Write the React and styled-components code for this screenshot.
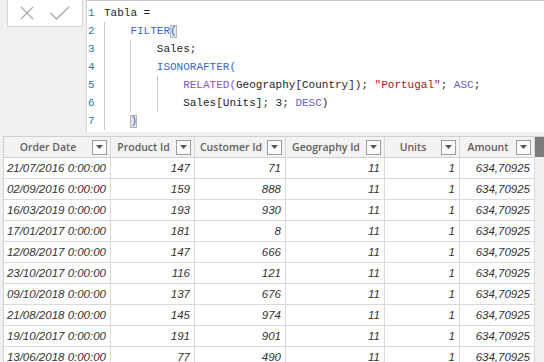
import React from 'react';
import styled, { createGlobalStyle } from 'styled-components';

const GlobalStyle = createGlobalStyle`
  html, body {
    margin: 0;
    padding: 0;
    background: #f0f0f0;
    overflow: hidden;
  }
`;

const code = [
  { indent: 0, parts: [['Tabla =', 'plain']] },
  { indent: 1, parts: [['FILTER', 'fn'], ['(', 'match']] },
  { indent: 2, parts: [['Sales;', 'plain']] },
  { indent: 2, parts: [['ISONORAFTER(', 'fn']] },
  {
    indent: 3,
    parts: [
      ['RELATED(', 'fn2'],
      ['Geography[Country]); ', 'plain'],
      ['"Portugal"', 'str'],
      ['; ', 'plain'],
      ['ASC', 'kw'],
      [';', 'plain'],
    ],
  },
  { indent: 3, parts: [['Sales[Units]; 3; ', 'plain'], ['DESC', 'kw'], [')', 'plain']] },
  { indent: 1, parts: [[')', 'match']] },
];

const columns = ['Order Date', 'Product Id', 'Customer Id', 'Geography Id', 'Units', 'Amount'];

const rows = [
  ['21/07/2016 0:00:00', 147, 71],
  ['02/09/2016 0:00:00', 159, 888],
  ['16/03/2019 0:00:00', 193, 930],
  ['17/01/2017 0:00:00', 181, 8],
  ['12/08/2017 0:00:00', 147, 666],
  ['23/10/2017 0:00:00', 116, 121],
  ['09/10/2018 0:00:00', 137, 676],
  ['21/08/2018 0:00:00', 145, 974],
  ['19/10/2017 0:00:00', 191, 901],
  ['13/06/2018 0:00:00', 77, 490],
];

function App() {
  return (
    <Page>
      <GlobalStyle />
      <TopArea>
        <ActionBox>
          <svg width="16" height="16" viewBox="0 0 16 16">
            <path d="M2 2 L14 14 M14 2 L2 14" stroke="#ababab" strokeWidth="1.3" fill="none" />
          </svg>
          <svg width="22" height="16" viewBox="0 0 22 16">
            <path d="M1.5 8 L7.5 14 L20.5 1.5" stroke="#ababab" strokeWidth="1.3" fill="none" />
          </svg>
        </ActionBox>
        <Editor>
          {code.map((line, i) => (
            <CodeLine key={i}>
              <LineNo>{i + 1}</LineNo>
              {Array.from({ length: line.indent }).map((_, g) => (
                <Guide key={g} />
              ))}
              {line.parts.map(([text, kind], j) => (
                <Token key={j} $kind={kind}>{text}</Token>
              ))}
            </CodeLine>
          ))}
        </Editor>
      </TopArea>
      <TableArea>
        <Table>
          <HeaderRow>
            {columns.map((c) => (
              <HeadCell key={c}>
                <HeadLabel>{c}</HeadLabel>
                <Dropdown>
                  <svg width="7" height="4" viewBox="0 0 7 4">
                    <path d="M0 0 L7 0 L3.5 4 Z" fill="#555" />
                  </svg>
                </Dropdown>
              </HeadCell>
            ))}
          </HeaderRow>
          {rows.map((r, i) => (
            <Row key={i}>
              <Cell>{r[0]}</Cell>
              <Cell>{r[1]}</Cell>
              <Cell>{r[2]}</Cell>
              <Cell>11</Cell>
              <Cell>1</Cell>
              <Cell>634,70925</Cell>
            </Row>
          ))}
        </Table>
        <Scrollbar>
          <Thumb />
        </Scrollbar>
      </TableArea>
    </Page>
  );
}

export default App;

const Page = styled.div`
  width: 544px;
  height: 362px;
  overflow: hidden;
  background: #f0f0f0;
`;

const TopArea = styled.div`
  display: flex;
  align-items: flex-start;
  height: 136px;
`;

const ActionBox = styled.div`
  margin-left: 7px;
  width: 74px;
  height: 26px;
  background: #fff;
  border: 1px solid #d4d4d4;
  border-top: 0;
  box-sizing: content-box;
  display: flex;
  align-items: center;
  gap: 14px;
  justify-content: center;
`;

const Editor = styled.div`
  margin-left: 3px;
  flex: 1;
  height: 128px;
  background: #fff;
  border-top: 1px solid #c4c4c4;
  border-left: 1px solid #d4d4d4;
  padding-top: 3px;
  font-family: "Liberation Mono", "DejaVu Sans Mono", monospace;
  font-size: 11px;
`;

const CodeLine = styled.div`
  display: flex;
  align-items: stretch;
  height: 18px;
  line-height: 18px;
  white-space: pre;
`;

const LineNo = styled.span`
  width: 16px;
  padding-left: 1px;
  color: #2b7d9a;
`;

const Guide = styled.span`
  width: 26.4px;
  flex-shrink: 0;
  border-left: 1px solid #c8c8c8;
  box-sizing: border-box;
`;

const tokenColors = {
  plain: '#1e1e1e',
  fn: '#3a68c8',
  fn2: '#8656c0',
  kw: '#6a5cc8',
  str: '#a31515',
  match: '#3a68c8',
};

const Token = styled.span`
  color: ${({ $kind }) => tokenColors[$kind]};
  ${({ $kind }) =>
    $kind === 'match' &&
    `
    background: #e6e6e6;
    box-shadow: inset 0 0 0 1px #b4b4b4;
    height: 13px;
    line-height: 13px;
    margin-top: 3px;
  `}
`;

const TableArea = styled.div`
  display: flex;
  margin-left: 3px;
`;

const Table = styled.div`
  border-left: 1px solid #d0d0d0;
  border-top: 1px solid #d0d0d0;
  font-family: "Liberation Sans", Arial, sans-serif;
`;

const gridCols = '107px 84px 91px 99px 75px 75px';

const HeaderRow = styled.div`
  display: grid;
  grid-template-columns: ${gridCols};
  height: 21px;
  background: #f3f3f3;
  border-bottom: 1px solid #d0d0d0;
  box-sizing: border-box;
`;

const HeadCell = styled.div`
  display: flex;
  align-items: center;
  border-right: 1px solid #d8d8d8;
  padding-right: 3px;
`;

const HeadLabel = styled.span`
  flex: 1;
  text-align: center;
  font-family: "Open Sans", "Noto Sans", sans-serif;
  font-size: 10.5px;
  font-weight: 600;
  color: #5f5f5f;
`;

const Dropdown = styled.div`
  width: 13px;
  height: 13px;
  border: 1px solid #9c9c9c;
  background: #fafafa;
  display: flex;
  align-items: center;
  justify-content: center;
`;

const Row = styled.div`
  display: grid;
  grid-template-columns: ${gridCols};
  height: 21px;
  background: #fff;
  border-bottom: 1px solid #dadada;
  box-sizing: border-box;
`;

const Cell = styled.div`
  border-right: 1px solid #dadada;
  text-align: right;
  padding-right: 4px;
  line-height: 20px;
  font-size: 11.5px;
  font-style: italic;
  color: #333;
  white-space: nowrap;
`;

const Scrollbar = styled.div`
  flex: 1;
  background: #f0f0f0;
  border-top: 1px solid #d0d0d0;
`;

const Thumb = styled.div`
  height: 20px;
  background: #7c7c7c;
`;
